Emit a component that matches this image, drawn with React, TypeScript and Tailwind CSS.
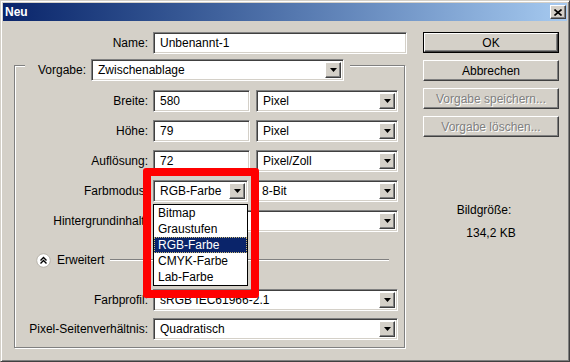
import React from "react";

// win2000-style bevels
const sunken =
  "border border-t-[#808080] border-l-[#808080] border-b-white border-r-white shadow-[inset_1px_1px_0_#404040,inset_-1px_-1px_0_#d4d0c8]";
const raised =
  "border border-t-white border-l-white border-b-[#404040] border-r-[#404040] shadow-[inset_-1px_-1px_0_#808080]";

const Arrow = () => (
  <div className={`w-[16px] h-full bg-[#d4d0c8] flex items-center justify-center ${raised}`}>
    <svg width="7" height="4" viewBox="0 0 7 4">
      <path d="M0 0h7L3.5 4z" fill="#000" />
    </svg>
  </div>
);

const Field = ({ value, className }: { value: string; className?: string }) => (
  <div className={`h-[22px] bg-white flex items-center pl-[6px] ${sunken} ${className ?? ""}`}>{value}</div>
);

const Select = ({ value, className }: { value: string; className?: string }) => (
  <div className={`h-[22px] bg-white flex items-center p-[2px] ${sunken} ${className ?? ""}`}>
    <span className="flex-1 pl-[4px] whitespace-nowrap overflow-hidden">{value}</span>
    <Arrow />
  </div>
);

const Label = ({ text, w }: { text: string; w: string }) => (
  <div className={`${w} text-right whitespace-nowrap`}>{text}</div>
);

const Button = ({ text, isDefault, disabled }: { text: string; isDefault?: boolean; disabled?: boolean }) => (
  <div className={`h-[21px] w-[136px] ${isDefault ? "border border-black" : ""}`}>
    <div
      className={`h-full w-full flex items-center justify-center bg-[#d4d0c8] ${raised} ${
        disabled ? "text-[#808080] [text-shadow:1px_1px_0_#fff]" : "text-black"
      }`}
    >
      {text}
    </div>
  </div>
);

export default function App() {
  const modes = ["Bitmap", "Graustufen", "RGB-Farbe", "CMYK-Farbe", "Lab-Farbe"];

  return (
    <div className="relative w-[570px] h-[362px] bg-[#d4d0c8] p-[2px] border border-t-[#d4d0c8] border-l-[#d4d0c8] border-r-[#404040] border-b-[#404040] shadow-[inset_1px_1px_0_#fff,inset_-1px_-1px_0_#808080] font-['Liberation_Sans',Arial,sans-serif] text-[12px] text-black overflow-hidden">
      {/* title bar */}
      <div className="h-[18px] flex items-center justify-between bg-gradient-to-r from-[#0a246a] to-[#a6caf0] pl-[2px] pr-[1px]">
        <span className="text-white font-bold text-[12px]">Neu</span>
        <div className={`w-[16px] h-[14px] bg-[#d4d0c8] flex items-center justify-center ${raised}`}>
          <svg width="8" height="7" viewBox="0 0 8 7">
            <path d="M0.5 0.5L7.5 6.5M7.5 0.5L0.5 6.5" stroke="#000" strokeWidth="1.6" />
          </svg>
        </div>
      </div>

      <div className="flex pt-[11px]">
        {/* left column */}
        <div className="w-[404px]">
          <div className="flex items-center h-[22px]">
            <Label text="Name:" w="w-[145px]" />
            <Field value="Unbenannt-1" className="ml-[5px] w-[254px]" />
          </div>

          <div className="ml-[11px] mt-[11px] w-[391px] h-[283px] border border-[#808080] shadow-[inset_1px_1px_0_#fff,1px_1px_0_#fff]">
            <div className="mt-[-7px] ml-[10px] pl-[2px] pr-[6px] flex w-fit items-center bg-[#d4d0c8]">
              <Label text="Vorgabe:" w="w-[59px]" />
              <Select value="Zwischenablage" className="ml-[5px] w-[253px]" />
            </div>

            <div className="mt-[9px] flex items-center">
              <Label text="Breite:" w="w-[133px]" />
              <Field value="580" className="ml-[5px] w-[97px]" />
              <Select value="Pixel" className="ml-[6px] w-[142px]" />
            </div>
            <div className="mt-[8px] flex items-center">
              <Label text="Höhe:" w="w-[133px]" />
              <Field value="79" className="ml-[5px] w-[97px]" />
              <Select value="Pixel" className="ml-[6px] w-[142px]" />
            </div>
            <div className="mt-[8px] flex items-center">
              <Label text="Auflösung:" w="w-[133px]" />
              <Field value="72" className="ml-[5px] w-[97px]" />
              <Select value="Pixel/Zoll" className="ml-[6px] w-[142px]" />
            </div>
            <div className="mt-[8px] flex items-center">
              <Label text="Farbmodus:" w="w-[133px]" />
              <Select value="RGB-Farbe" className="ml-[5px] w-[95px]" />
              <Select value="8-Bit" className="ml-[7px] w-[143px]" />
            </div>
            <div className="mt-[8px] flex items-center">
              <Label text="Hintergrundinhalt:" w="w-[133px]" />
              <Select value="" className="ml-[5px] w-[245px]" />
            </div>

            <div className="mt-[20px] h-[16px] flex items-center">
              <svg width="15" height="15" viewBox="0 0 15 15" className="ml-[21px]">
                <circle cx="7.5" cy="7.5" r="6.8" fill="#fff" stroke="#b8b4ac" />
                <path d="M4.5 7.5L7.5 4.5L10.5 7.5M4.5 10.5L7.5 7.5L10.5 10.5" stroke="#000" strokeWidth="1.4" fill="none" />
              </svg>
              <span className="ml-[6px]">Erweitert</span>
              <div className="ml-[6px] mr-[15px] flex-1 h-[2px] border-t border-t-[#808080] border-b border-b-white" />
            </div>

            <div className="mt-[21px] flex items-center">
              <Label text="Farbprofil:" w="w-[133px]" />
              <Select value="sRGB IEC61966-2.1" className="ml-[5px] w-[245px]" />
            </div>
            <div className="mt-[7px] flex items-center">
              <Label text="Pixel-Seitenverhältnis:" w="w-[133px]" />
              <Select value="Quadratisch" className="ml-[5px] w-[245px]" />
            </div>
          </div>
        </div>

        {/* right column */}
        <div className="ml-[16px] w-[136px] flex flex-col gap-[7px]">
          <Button text="OK" isDefault />
          <Button text="Abbrechen" />
          <Button text="Vorgabe speichern..." disabled />
          <Button text="Vorgabe löschen..." disabled />
          <div className="mt-[59px] leading-[15px] text-center pr-[14px]">Bildgröße:</div>
          <div className="mt-[1px] leading-[15px] text-center">134,2 KB</div>
        </div>
      </div>

      {/* open colour mode list */}
      <div className="absolute left-[152px] top-[203px] w-[95px] h-[82px] bg-white border border-black">
        {modes.map((m) => (
          <div
            key={m}
            className={`h-[16px] leading-[14px] pl-[3px] border border-dotted ${
              m === "RGB-Farbe" ? "bg-[#0a246a] text-white border-[#c8b878]" : "border-transparent"
            }`}
          >
            {m}
          </div>
        ))}
      </div>

      {/* red highlight */}
      <div className="absolute left-[142px] top-[167px] w-[116px] h-[130px] border-[8px] border-[#ff0000] rounded-[3px]" />
    </div>
  );
}
